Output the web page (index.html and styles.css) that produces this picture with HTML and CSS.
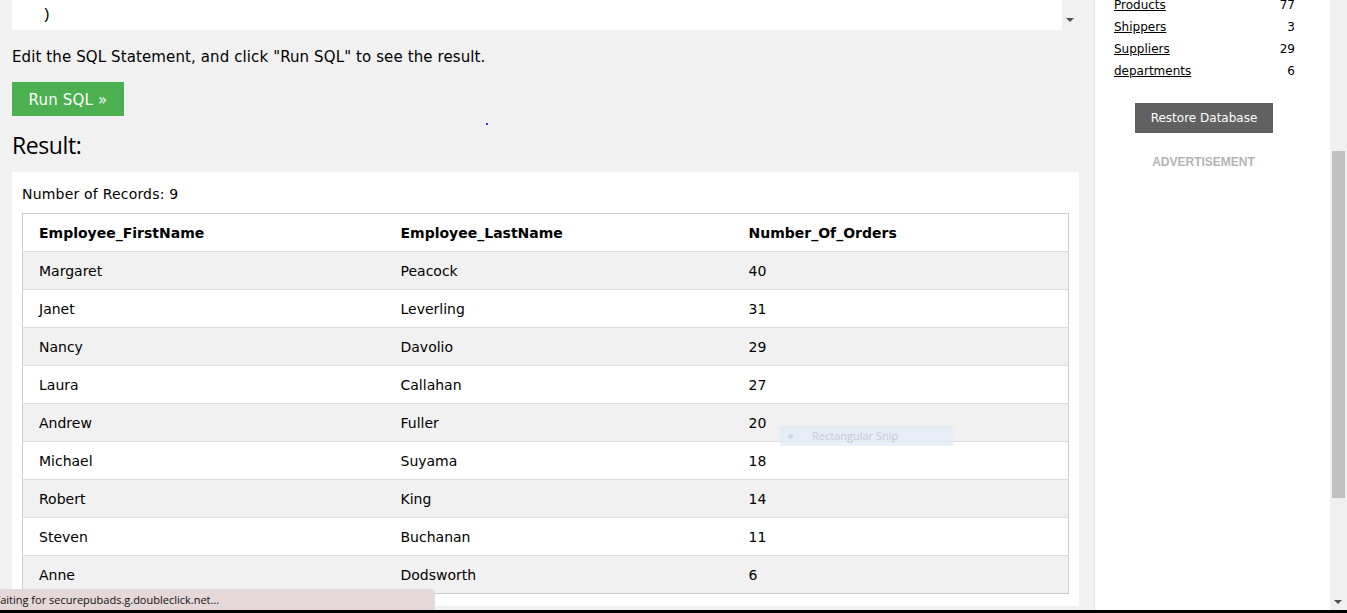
FILE: index.html
```html
<!DOCTYPE html>
<html>
<head>
<meta charset="utf-8">
<link rel="stylesheet" href="styles.css">
</head>
<body>
<div class="page">
  <div class="main">
    <div class="code-wrap">
      <div class="code">)</div>
      <div class="code-scroll"><span class="tri"></span></div>
    </div>
    <p class="intro">Edit the SQL Statement, and click "Run SQL" to see the result.</p>
    <button class="run">Run SQL »</button>
    <h2 class="result-title">Result:</h2>
    <div class="result">
      <div class="count">Number of Records: 9</div>
      <table class="tbl">
        <tr><th class="c1">Employee_FirstName</th><th class="c2">Employee_LastName</th><th class="c3">Number_Of_Orders</th></tr>
        <tr><td>Margaret</td><td>Peacock</td><td>40</td></tr>
        <tr><td>Janet</td><td>Leverling</td><td>31</td></tr>
        <tr><td>Nancy</td><td>Davolio</td><td>29</td></tr>
        <tr><td>Laura</td><td>Callahan</td><td>27</td></tr>
        <tr><td>Andrew</td><td>Fuller</td><td>20</td></tr>
        <tr><td>Michael</td><td>Suyama</td><td>18</td></tr>
        <tr><td>Robert</td><td>King</td><td>14</td></tr>
        <tr><td>Steven</td><td>Buchanan</td><td>11</td></tr>
        <tr><td>Anne</td><td>Dodsworth</td><td>6</td></tr>
      </table>
    </div>
    <span class="dot"></span>
    <div class="snip"><span class="snip-ico"></span>Rectangular Snip</div>
  </div>
  <div class="sidebar">
    <div class="db-list">
      <div class="db-row"><a href="#">Products</a><span>77</span></div>
      <div class="db-row"><a href="#">Shippers</a><span>3</span></div>
      <div class="db-row"><a href="#">Suppliers</a><span>29</span></div>
      <div class="db-row"><a href="#">departments</a><span>6</span></div>
    </div>
    <button class="restore">Restore Database</button>
    <div class="ad">ADVERTISEMENT</div>
  </div>
  <div class="vscroll">
    <div class="thumb"></div>
    <span class="tri tri-bottom"></span>
  </div>
</div>
<div class="status"><span>Waiting for securepubads.g.doubleclick.net...</span></div>
<div class="taskbar"></div>
</body>
</html>
```

FILE: styles.css
```css
* { box-sizing: border-box; }
html, body { margin: 0; padding: 0; }
body {
  width: 1347px;
  height: 613px;
  overflow: hidden;
  font-family: "DejaVu Sans", Verdana, sans-serif;
  color: #000;
  position: relative;
}
.page {
  display: flex;
  height: 610px;
}
.main {
  position: relative;
  width: 1094px;
  background: #f1f1f1;
  padding: 0 15px 0 12px;
}
.code-wrap {
  display: flex;
  height: 30px;
}
.code {
  flex: 1;
  background: #fff;
  font-family: "Liberation Mono", monospace;
  font-size: 15px;
  padding: 7px 0 0 30px;
  line-height: 18px;
}
.code-scroll {
  width: 17px;
  position: relative;
}
.tri {
  position: absolute;
  width: 0; height: 0;
  border-left: 4px solid transparent;
  border-right: 4px solid transparent;
  border-top: 4px solid #505050;
  left: 4px;
  top: 18px;
}
.intro {
  margin: 0;
  padding-top: 17px;
  font-size: 15px;
  letter-spacing: 0.11px;
  line-height: 20px;
  height: 52px;
}
.run {
  display: block;
  width: 112px;
  height: 34px;
  border: 0;
  background: #4caf50;
  color: #fff;
  font-family: "DejaVu Sans", Verdana, sans-serif;
  font-size: 15px;
  letter-spacing: 0.2px;
  padding: 2px 0 0 0;
  text-align: center;
}
.result-title {
  margin: 0;
  font-family: "Open Sans", sans-serif;
  font-weight: 400;
  font-size: 23px;
  line-height: 30px;
  padding-top: 14px;
  height: 56px;
  letter-spacing: -0.4px;
}
.result {
  background: #fff;
  padding: 10px 10px 12px 10px;
}
.count {
  font-size: 14px;
  letter-spacing: 0.2px;
  line-height: 22px;
  padding-top: 1px;
  height: 31px;
}
.tbl {
  width: 1047px;
  border-collapse: collapse;
  border: 1px solid #ccc;
  font-size: 14px;
}
.tbl th, .tbl td {
  text-align: left;
  padding: 0 8px;
  height: 38px;
  border-bottom: 1px solid #ddd;
}
.tbl th:first-child, .tbl td:first-child { padding-left: 16px; }
.tbl th { font-weight: bold; }
.tbl tr:nth-child(even) { background: #f1f1f1; }
.tbl tr:last-child td { border-bottom: 0; }
.c1 { width: 370px; }
.c2 { width: 348px; }
.dot {
  position: absolute;
  left: 486px;
  top: 123px;
  width: 2px;
  height: 2px;
  background: #3030ff;
}
.snip {
  position: absolute;
  left: 780px;
  top: 426px;
  width: 173px;
  height: 20px;
  background: rgba(225, 235, 245, 0.75);
  color: #c6ccd3;
  font-family: "Open Sans", sans-serif;
  font-size: 11px;
  line-height: 20px;
  padding-left: 32px;
}
.snip-ico {
  position: absolute;
  left: 8px;
  top: 8px;
  width: 5px;
  height: 5px;
  border-radius: 50%;
  background: #d3d8de;
}
.sidebar {
  width: 236px;
  background: #fff;
  border-left: 1px solid #e4e4e4;
  padding: 0 35px 0 19px;
}
.db-list {
  margin-top: -6px;
}
.db-row {
  display: flex;
  justify-content: space-between;
  font-size: 12px;
  line-height: 22px;
}
.db-row a {
  color: #000;
  text-decoration: underline;
}
.restore {
  display: block;
  margin: 21px 0 0 21px;
  width: 138px;
  height: 30px;
  border: 0;
  background: #616161;
  color: #fff;
  font-family: "DejaVu Sans", Verdana, sans-serif;
  font-size: 12px;
  padding: 0;
}
.ad {
  text-align: center;
  color: #b4b4b4;
  font-family: "Liberation Sans", Arial, sans-serif;
  font-weight: bold;
  font-size: 12px;
  margin-top: 22px;
  padding-right: 2px;
}
.vscroll {
  position: relative;
  width: 17px;
  background: #f0f0f0;
}
.thumb {
  position: absolute;
  left: 2px;
  top: 151px;
  width: 13px;
  height: 347px;
  background: #c1c1c1;
}
.tri-bottom {
  top: 600px;
  left: 4px;
  border-top-color: #505050;
}
.status {
  position: absolute;
  left: 0;
  top: 589px;
  width: 435px;
  height: 21px;
  background: #e4d8d8;
  border-top-right-radius: 4px;
  overflow: hidden;
  font-family: "Open Sans", sans-serif;
  font-size: 11px;
  line-height: 21px;
  color: #111;
}
.status span {
  margin-left: -10px;
}
.taskbar {
  position: absolute;
  left: 0;
  bottom: 0;
  width: 1347px;
  height: 3px;
  background: #000;
}
```
